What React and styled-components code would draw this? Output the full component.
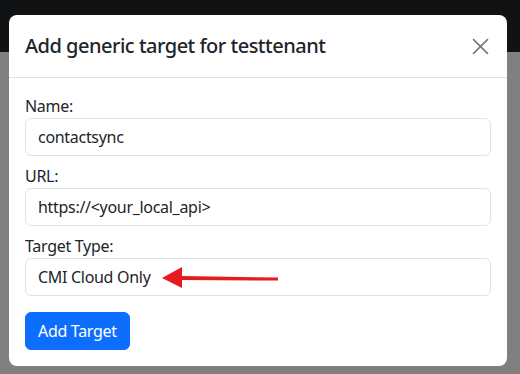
import styled, { createGlobalStyle } from "styled-components";

const GlobalStyle = createGlobalStyle`
  html, body {
    margin: 0;
    padding: 0;
  }
  body {
    width: 520px;
    height: 374px;
    overflow: hidden;
    background: #808080;
    font-family: "Noto Sans", "Open Sans", sans-serif;
    color: #212529;
  }
`;

const Page = styled.div`
  position: relative;
  width: 520px;
  height: 374px;
`;

const NavBar = styled.div`
  height: 52px;
  background: #111214;
`;

const Modal = styled.div`
  position: absolute;
  top: 15px;
  left: 9px;
  width: 498px;
  background: #fff;
  border-radius: 8px;
  overflow: hidden;
`;

const ModalHeader = styled.div`
  display: flex;
  align-items: center;
  justify-content: space-between;
  padding: 16px;
  border-bottom: 1px solid #dee2e6;
`;

const Title = styled.h5`
  margin: 0;
  font-size: 20px;
  line-height: 30px;
  font-weight: 500;
  letter-spacing: -0.5px;
  color: #212529;
`;

const CloseButton = styled.button`
  display: flex;
  align-items: center;
  justify-content: center;
  width: 24px;
  height: 24px;
  padding: 0;
  margin-right: -1px;
  border: none;
  background: transparent;
  cursor: pointer;
`;

const ModalBody = styled.div`
  padding: 16px;
  letter-spacing: -0.3px;
`;

const Field = styled.div`
  position: relative;
  margin-bottom: ${(p) => (p.$last ? "16px" : "8px")};
`;

const Label = styled.label`
  display: block;
  font-size: 16px;
  line-height: 24px;
  color: #212529;
`;

const Input = styled.div`
  box-sizing: border-box;
  height: 38px;
  padding: 6px 12px;
  border: 1px solid #dee2e6;
  border-radius: 6px;
  font-size: 16px;
  line-height: 24px;
  color: #212529;
`;

const Arrow = styled.svg`
  position: absolute;
  left: 137px;
  top: 32px;
`;

const PrimaryButton = styled.button`
  box-sizing: border-box;
  height: 38px;
  padding: 6px 12px;
  border: 1px solid #0d6efd;
  border-radius: 6px;
  background: #0d6efd;
  color: #fff;
  font-family: inherit;
  font-size: 16px;
  line-height: 24px;
  letter-spacing: inherit;
`;

export default function App() {
  return (
    <Page>
      <GlobalStyle />
      <NavBar />
      <Modal>
        <ModalHeader>
          <Title>Add generic target for testtenant</Title>
          <CloseButton aria-label="Close">
            <svg width="17" height="17" viewBox="0 0 16 16">
              <path
                d="M1 1 L15 15 M15 1 L1 15"
                stroke="#7a7a7a"
                strokeWidth="1.6"
                fill="none"
              />
            </svg>
          </CloseButton>
        </ModalHeader>
        <ModalBody>
          <Field>
            <Label>Name:</Label>
            <Input>contactsync</Input>
          </Field>
          <Field>
            <Label>URL:</Label>
            <Input>https://&lt;your_local_api&gt;</Input>
          </Field>
          <Field $last>
            <Label>Target Type:</Label>
            <Input>CMI Cloud Only</Input>
            <Arrow width="120" height="24" viewBox="0 0 120 24">
              <path d="M20 10 L116 11.5 L116 14.5 L20 14 Z" fill="#e41c1f" />
              <path d="M0 12 L20 1 L20 22 Z" fill="#e41c1f" />
            </Arrow>
          </Field>
          <PrimaryButton>Add Target</PrimaryButton>
        </ModalBody>
      </Modal>
    </Page>
  );
}
